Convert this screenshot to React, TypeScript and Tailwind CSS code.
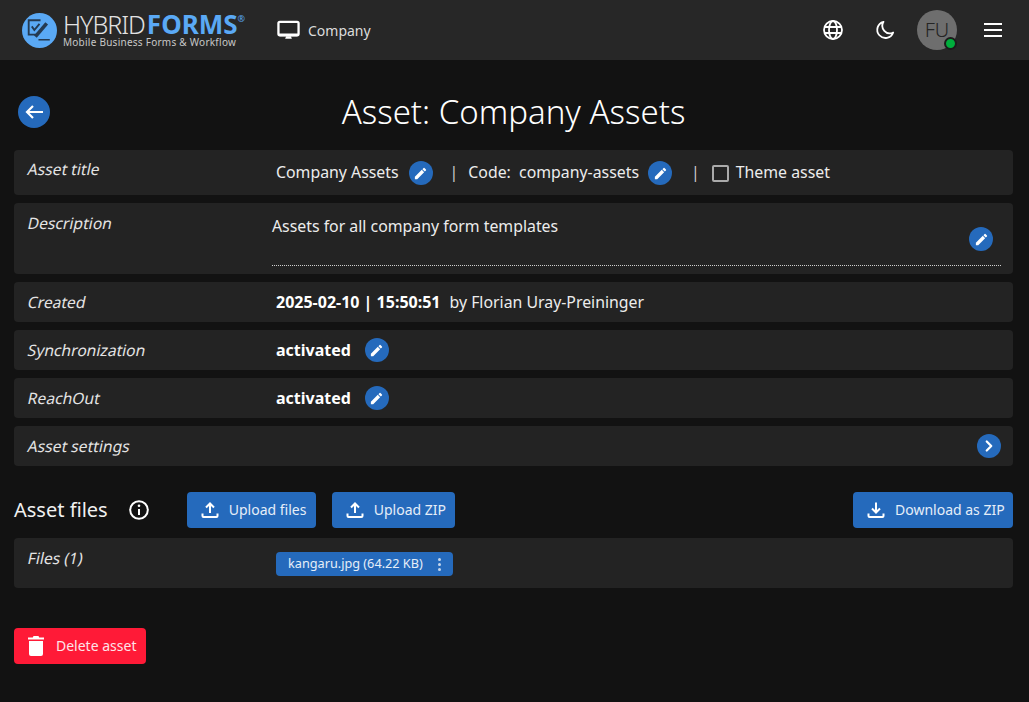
import React from "react";
import { ChevronRight } from "lucide-react";

const Pencil = () => (
  <svg viewBox="0 0 24 24" className="w-[15px] h-[15px]" fill="#fff">
    <path d="M3 17.25V21h3.75L17.81 9.94l-3.75-3.75L3 17.25zM20.71 7.04a1 1 0 0 0 0-1.41l-2.34-2.34a1 1 0 0 0-1.41 0l-1.83 1.83 3.75 3.75 1.83-1.83z" />
  </svg>
);

const EditBtn = () => (
  <span className="w-6 h-6 rounded-full bg-[#256abc] flex items-center justify-center shrink-0">
    <Pencil />
  </span>
);

const UploadIcon = () => (
  <svg viewBox="0 0 18 18" className="w-[18px] h-[18px]" fill="none" stroke="#fff" strokeWidth="2">
    <path d="M9 12V3M5 6.5 9 2.5l4 4M1.5 12.5V15a1 1 0 0 0 1 1h13a1 1 0 0 0 1-1v-2.5" />
  </svg>
);

const DownloadIcon = () => (
  <svg viewBox="0 0 18 18" className="w-[18px] h-[18px]" fill="none" stroke="#fff" strokeWidth="2">
    <path d="M9 1.5V11M5 7.5l4 4 4-4M1.5 12.5V15a1 1 0 0 0 1 1h13a1 1 0 0 0 1-1v-2.5" />
  </svg>
);

const Row = ({ label, className, children }: { label: string; className: string; children?: React.ReactNode }) => (
  <div className={`flex bg-[#232323] rounded-[4px] pl-[12px] ${className}`}>
    <div className="w-[250px] shrink-0 text-[15.65px] leading-5 text-[#e4e4e4]">
      <span className="inline-block origin-bottom-left -skew-x-12">{label}</span>
    </div>
    <div className="flex-1 min-w-0">{children}</div>
  </div>
);

const Btn = ({ icon, label, className }: { icon: React.ReactNode; label: string; className: string }) => (
  <button className={`h-9 rounded-[4px] bg-[#256abc] flex items-center text-[14px] text-[#e6eef8] ${className}`}>
    {icon}
    <span className="mb-[1px]">{label}</span>
  </button>
);

export default function App() {
  return (
    <div className="w-[1029px] h-[702px] overflow-hidden bg-[#121212] text-[#f0f0f0] font-['Noto_Sans','Open_Sans',sans-serif]">
      <header className="h-[60px] bg-[#272727] flex items-center text-white">
        <div className="flex items-center pl-[22px] w-[277px] shrink-0">
          <svg viewBox="0 0 34 34" className="w-[35px] h-[35px] shrink-0">
            <circle cx="17" cy="17" r="17" fill="#5aa9f5" />
            <path d="M18 7H6.500v14h9" fill="none" stroke="#243a52" strokeWidth="1.8" />
            <path d="m9.500 13 2.500 3.500 5-6" fill="none" stroke="#243a52" strokeWidth="1.8" />
            <path d="m13 23 11-13" stroke="#243a52" strokeWidth="3.500" />
            <path d="M16 26h11" stroke="#243a52" strokeWidth="1.500" />
          </svg>
          <div className="ml-[6px] flex flex-col w-[190px]">
            <div className="flex items-start h-[25px] leading-[24px]">
              <span className="text-[25px] font-light text-[#e2e2e2] tracking-[-1px]">HYBRID</span>
              <span className="ml-[2px] text-[26px] font-bold text-[#5aa9f5]">FORMS</span>
              <span className="text-[9px] leading-[14px] text-[#5aa9f5]">®</span>
            </div>
            <div className="text-[10px] leading-[11px] text-[#c8c8c8] tracking-[0.25px] whitespace-nowrap">Mobile Business Forms &amp; Workflow</div>
          </div>
        </div>
        <svg viewBox="0 0 24 24" className="w-[23px] h-[23px] shrink-0" fill="none">
          <rect x="1.500" y="3" width="21" height="14" rx="1.500" stroke="#fff" strokeWidth="2.400" fill="none" />
          <path d="M1.500 15h21v1.500a1.500 1.500 0 0 1-1.500 1.500H3a1.500 1.500 0 0 1-1.500-1.500z" fill="#fff" />
          <path d="M9.500 18h5l1 2.500h-7z" fill="#fff" />
        </svg>
        <span className="ml-[8px] text-[14px] text-[#dcdcdc]">Company</span>
        <div className="ml-auto flex items-center">
          <svg viewBox="0 0 20 20" className="w-[20px] h-[20px]" fill="none" stroke="#fff" strokeWidth="1.800">
            <circle cx="10" cy="10" r="9" />
            <ellipse cx="10" cy="10" rx="4" ry="9" />
            <path d="M1.500 7h17M1.500 13h17" />
          </svg>
          <svg viewBox="0 0 20 20" className="w-[20px] h-[20px] ml-[32px]" fill="none" stroke="#fff" strokeWidth="1.800">
            <path d="M8.500 1.800a8.200 8.200 0 1 0 9.700 10.700A7.500 7.500 0 0 1 8.500 1.800z" strokeLinejoin="round" />
          </svg>
          <div className="relative ml-[22px] w-10 h-10 rounded-full bg-[#6e6e6e] flex items-center justify-center text-[#242424] text-[20px] font-light">
            FU
            <span className="absolute right-0 bottom-0 w-[13px] h-[13px] rounded-full bg-[#00ae3c] border-2 border-[#1c1c1c]" />
          </div>
          <svg viewBox="0 0 18 14" className="w-[18px] h-[14px] ml-[27px] mr-[27px]" fill="#fff">
            <rect y="0" width="18" height="2" />
            <rect y="6" width="18" height="2" />
            <rect y="12" width="18" height="2" />
          </svg>
        </div>
      </header>

      <main className="pl-[14px] pr-[16px]">
        <div className="relative h-[90px] flex items-center justify-center">
          <span className="absolute left-[4px] top-[36px] w-8 h-8 rounded-full bg-[#256abc] flex items-center justify-center">
            <svg viewBox="0 0 18 14" className="w-[18px] h-[14px]" fill="none" stroke="#fff" strokeWidth="2.200">
              <path d="M18 7H2M8 1 2 7l6 6" />
            </svg>
          </span>
          <h1 className="text-[33px] leading-10 pt-[14px] text-white font-light">Asset: Company Assets</h1>
        </div>

        <div className="flex flex-col">
          <Row label="Asset title" className="h-[45px] pt-[9px]">
            <div className="flex items-center h-6 mt-[2px] text-[15.85px] text-[#ececec]">
              <span>Company Assets</span>
              <span className="ml-[10px]"><EditBtn /></span>
              <span className="ml-[17px] text-[#ccc]">|</span>
              <span className="ml-[10px] whitespace-pre">Code:  company-assets</span>
              <span className="ml-[9px]"><EditBtn /></span>
              <span className="ml-[19px] text-[#ccc]">|</span>
              <span className="ml-[12px] w-[17px] h-[17px] rounded-[2px] border-2 border-[#aaa]" />
              <span className="ml-[7px]">Theme asset</span>
            </div>
          </Row>
          <Row label="Description" className="h-[71px] mt-[8px] pt-[10px]">
            <div className="relative h-[53px] ml-[-4px] mr-[12px] border-b border-dotted border-[#cfcfcf] text-[15.85px] leading-[26px] text-[#ececec]">
              Assets for all company form templates
              <span className="absolute right-[8px] top-[14px]"><EditBtn /></span>
            </div>
          </Row>
          <Row label="Created" className="h-10 mt-[8px] items-center">
            <div className="text-[15.85px] text-[#ececec]">
              <span className="font-bold text-white text-[16px]">2025-02-10 | 15:50:51</span>
              <span className="ml-[9px]">by Florian Uray-Preininger</span>
            </div>
          </Row>
          <Row label="Synchronization" className="h-10 mt-[8px] items-center">
            <div className="flex items-center text-[16px] font-bold text-white">
              activated<span className="ml-[14px]"><EditBtn /></span>
            </div>
          </Row>
          <Row label="ReachOut" className="h-10 mt-[8px] items-center">
            <div className="flex items-center text-[16px] font-bold text-white">
              activated<span className="ml-[14px]"><EditBtn /></span>
            </div>
          </Row>
          <Row label="Asset settings" className="h-10 mt-[8px] items-center pr-[12px]">
            <div className="flex justify-end">
              <span className="w-6 h-6 rounded-full bg-[#256abc] flex items-center justify-center">
                <ChevronRight className="w-[18px] h-[18px] text-white" strokeWidth={3} />
              </span>
            </div>
          </Row>
        </div>

        <div className="flex items-center h-9 mt-[26px]">
          <span className="text-[20px] text-[#f0f0f0]">Asset files</span>
          <svg viewBox="0 0 20 20" className="w-[20px] h-[20px] ml-[21px]" fill="none" stroke="#fff" strokeWidth="2">
            <circle cx="10" cy="10" r="8.800" />
            <path d="M10 9v6" />
            <circle cx="10" cy="5.800" r="1.300" fill="#fff" stroke="none" />
          </svg>
          <Btn icon={<UploadIcon />} label="Upload files" className="ml-[38px] w-[129px] pl-[14px] gap-[10px]" />
          <Btn icon={<UploadIcon />} label="Upload ZIP" className="ml-[16px] w-[123px] pl-[14px] gap-[10px]" />
          <Btn icon={<DownloadIcon />} label="Download as ZIP" className="ml-auto w-[160px] pl-[14px] gap-[10px]" />
        </div>

        <Row label="Files (1)" className="h-[50px] mt-[10px] pt-[10px]">
          <div className="flex items-center w-[177px] h-6 mt-[4px] rounded-[4px] bg-[#256abc] pl-3 text-[12.7px] text-[#e6eef8]">
            <span className="whitespace-nowrap">kangaru.jpg (64.22 KB)</span>
            <span className="ml-[15px] flex flex-col gap-[2px]">
              <span className="w-[3px] h-[3px] rounded-full bg-[#c4d6ec]" />
              <span className="w-[3px] h-[3px] rounded-full bg-[#c4d6ec]" />
              <span className="w-[3px] h-[3px] rounded-full bg-[#c4d6ec]" />
            </span>
          </div>
        </Row>

        <button className="mt-[40px] w-[132px] h-9 rounded-[4px] bg-[#ff1a37] flex items-center pl-[14px] text-[14px] text-[#fde4e7] gap-[12px]">
          <svg viewBox="0 0 16 20" className="w-[16px] h-[20px]" fill="#fff">
            <path d="M5.500 0h5l.7 1.500H16v2H0v-2h4.800zM1 5h14v13a2 2 0 0 1-2 2H3a2 2 0 0 1-2-2z" />
          </svg>
          <span className="mb-[1px]">Delete asset</span>
        </button>
      </main>
    </div>
  );
}
